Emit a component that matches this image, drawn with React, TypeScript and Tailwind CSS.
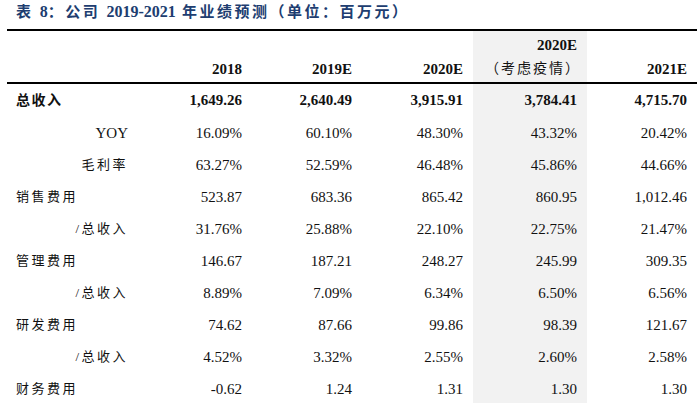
const COLS = ["2018", "2019E", "2020E", "2020E*", "2021E"];

type Row = { label: string; kind: "main" | "sub" | "bold"; values: string[] };

const ROWS: Row[] = [
  { label: "总收入", kind: "bold", values: ["1,649.26", "2,640.49", "3,915.91", "3,784.41", "4,715.70"] },
  { label: "YOY", kind: "sub", values: ["16.09%", "60.10%", "48.30%", "43.32%", "20.42%"] },
  { label: "毛利率", kind: "sub", values: ["63.27%", "52.59%", "46.48%", "45.86%", "44.66%"] },
  { label: "销售费用", kind: "main", values: ["523.87", "683.36", "865.42", "860.95", "1,012.46"] },
  { label: "/总收入", kind: "sub", values: ["31.76%", "25.88%", "22.10%", "22.75%", "21.47%"] },
  { label: "管理费用", kind: "main", values: ["146.67", "187.21", "248.27", "245.99", "309.35"] },
  { label: "/总收入", kind: "sub", values: ["8.89%", "7.09%", "6.34%", "6.50%", "6.56%"] },
  { label: "研发费用", kind: "main", values: ["74.62", "87.66", "99.86", "98.39", "121.67"] },
  { label: "/总收入", kind: "sub", values: ["4.52%", "3.32%", "2.55%", "2.60%", "2.58%"] },
  { label: "财务费用", kind: "main", values: ["-0.62", "1.24", "1.31", "1.30", "1.30"] },
];

const grid = "grid grid-cols-[135px_110px_110px_111px_114px_110px]";

function labelClass(r: Row) {
  if (r.kind === "bold") return "pl-[9px] font-bold text-[14px] tracking-[1.5px]";
  if (r.label === "YOY") return "justify-end pr-[14px] text-[15px]";
  if (r.kind === "sub") return "justify-end pr-[14px] text-[13px] tracking-[2.5px]";
  return "pl-[9px] text-[13px] tracking-[2.5px]";
}

export default function App() {
  return (
    <div
      className="w-[700px] h-[403px] bg-white overflow-hidden text-[#111]"
      style={{ fontFamily: '"Liberation Serif", "Noto Sans CJK SC", serif' }}
    >
      {/* Title */}
      <div className="h-[29px] pl-[16px] pt-[3px] text-[15px] leading-[18px] font-bold text-[#203d70] tracking-[2.5px] whitespace-nowrap">
        表 <span className="text-[16px] tracking-normal">8</span>：公司 <span className="text-[16px] tracking-normal">2019-2021</span> 年业绩预测（单位：百万元）
      </div>

      <div className="ml-[7px] w-[690px]">
        <div className="h-[2px] bg-black" />

        {/* Header */}
        <div className={`${grid} h-[51px] text-[15px] font-bold leading-[24px]`}>
          <div />
          {COLS.map((c, i) => (
            <div
              key={c}
              className={`flex flex-col justify-end items-end pr-[10px] pb-[1px] ${i === 3 ? "bg-[#f2f2f2]" : ""}`}
            >
              {i === 3 ? (
                <>
                  <span>2020E</span>
                  <span className="font-normal text-[14px] tracking-[2px] mr-[-4px]">（考虑疫情）</span>
                </>
              ) : (
                <span>{c}</span>
              )}
            </div>
          ))}
        </div>

        <div className="h-[2px] bg-black" />

        {/* Body */}
        {ROWS.map((r, ri) => (
          <div key={ri} className={`${grid} ${ri === 0 ? "h-[33px]" : "h-[32px]"} text-[15px]`}>
            <div className={`flex items-center ${labelClass(r)}`}>{r.label}</div>
            {r.values.map((v, i) => (
              <div
                key={i}
                className={`flex items-center justify-end pr-[10px] ${r.kind === "bold" ? "font-bold" : ""} ${
                  i === 3 ? "bg-[#f2f2f2]" : ""
                }`}
              >
                {v}
              </div>
            ))}
          </div>
        ))}
      </div>
    </div>
  );
}
